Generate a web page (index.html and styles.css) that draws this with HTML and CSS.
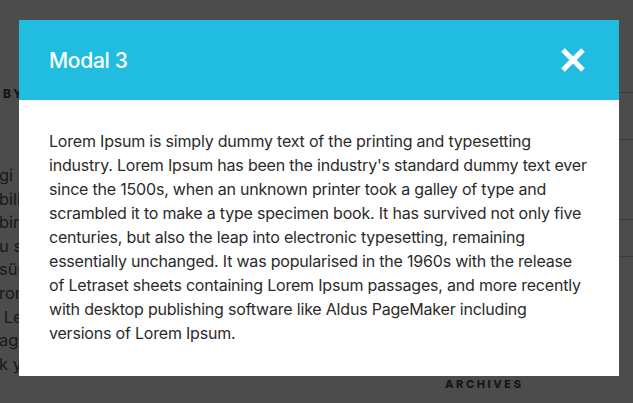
FILE: index.html
```html
<!DOCTYPE html>
<html lang="en">
<head>
<meta charset="utf-8">
<title>Modal 3</title>
<link rel="stylesheet" href="styles.css">
</head>
<body>
<div class="page">
  <main class="page-main">
    <div class="byline">BY</div>
    <div class="article">
      <p class="line">gi v</p>
      <p class="line">bili</p>
      <p class="line">bir</p>
      <p class="line">u sa</p>
      <p class="line">sür</p>
      <p class="line">ron</p>
      <p class="line">&nbsp;Le</p>
      <p class="line">age</p>
      <p class="line">k y</p>
    </div>
  </main>
  <aside class="page-side">
    <ul class="side-list">
      <li class="side-item side-item-a"></li>
      <li class="side-item side-item-b"></li>
      <li class="side-item side-item-c"></li>
    </ul>
    <h3 class="side-title">ARCHIVES</h3>
  </aside>
</div>

<div class="overlay">
  <div class="modal">
    <header class="modal-header">
      <h2 class="modal-title">Modal 3</h2>
      <button class="modal-close" aria-label="Close">
        <svg width="26" height="26" viewBox="0 0 26 26">
          <path d="M3 3 L23 23 M23 3 L3 23" stroke="#ffffff" stroke-width="5.2" stroke-linecap="butt" fill="none"/>
        </svg>
      </button>
    </header>
    <div class="modal-body">
      <p>Lorem Ipsum is simply dummy text of the printing and typesetting industry. Lorem Ipsum has been the industry's standard dummy text ever since the 1500s, when an unknown printer took a galley of type and scrambled it to make a type specimen book. It has survived not only five centuries, but also the leap into electronic typesetting, remaining essentially unchanged. It was popularised in the 1960s with the release of Letraset sheets containing Lorem Ipsum passages, and more recently with desktop publishing software like Aldus PageMaker including versions of Lorem Ipsum.</p>
    </div>
  </div>
</div>
</body>
</html>
```

FILE: styles.css
```css
* { box-sizing: border-box; }

html, body {
  margin: 0;
  padding: 0;
  width: 633px;
  height: 403px;
  overflow: hidden;
  background: #ffffff;
  font-family: Inter, "Liberation Sans", sans-serif;
}

.page {
  display: flex;
  width: 633px;
  height: 403px;
}

.page-main {
  width: 440px;
  padding-top: 86px;
  color: #555555;
  white-space: nowrap;
  overflow: hidden;
}

.byline {
  margin-left: 3px;
  font-size: 12px;
  font-weight: 800;
  letter-spacing: 2px;
  color: #4a4a4a;
}

.article {
  margin-top: 63px;
}

.line {
  margin: 0 0 0 -1px;
  font-size: 16.5px;
  line-height: 23.6px;
}

.page-side {
  flex: 1;
  padding-top: 92px;
  padding-left: 5px;
}

.side-list {
  list-style: none;
  margin: 0 0 0 -5px;
  padding: 0;
  border-top: 1px solid #c8c8c8;
}

.side-item {
  border-bottom: 1px solid #c8c8c8;
}

.side-item-a { height: 47px; }
.side-item-b { height: 80px; }
.side-item-c { height: 37px; }

.side-title {
  margin: 120px 0 0 0;
  font-size: 11px;
  font-weight: 800;
  letter-spacing: 2.6px;
  color: #4a4a4a;
}

.overlay {
  position: fixed;
  inset: 0;
  background: rgba(0, 0, 0, 0.7);
  padding: 20px 0 0 19px;
}

.modal {
  width: 600px;
  background: #ffffff;
}

.modal-header {
  height: 80px;
  background: #20bde1;
  display: flex;
  align-items: center;
  justify-content: space-between;
  padding: 0 33px 0 30px;
}

.modal-title {
  margin: 0;
  color: #ffffff;
  font-size: 21px;
  font-weight: 500;
  letter-spacing: -0.3px;
}

.modal-close {
  border: 0;
  background: none;
  padding: 0;
  width: 26px;
  height: 26px;
  display: flex;
  cursor: pointer;
}

.modal-body {
  padding: 29px 30px 31px 30px;
}

.modal-body p {
  margin: 0;
  font-size: 16px;
  line-height: 24px;
  letter-spacing: -0.2px;
  color: #2b2b2b;
}
```
